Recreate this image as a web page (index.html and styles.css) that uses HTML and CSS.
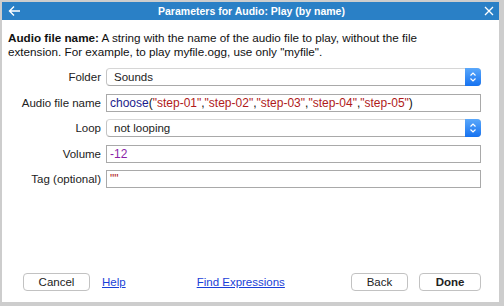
FILE: index.html
```html
<!DOCTYPE html>
<html lang="en">

<head>
  <meta charset="UTF-8" />
  <title>Parameters for Audio: Play (by name)</title>
  <link rel="stylesheet" href="styles.css">
</head>

<body>
  <div class="window">
    <header class="titlebar">
      <span class="back-icon">
        <svg width="13" height="12" viewBox="0 0 13 12">
          <path d="M12 6H1.5M6 1.5L1.5 6 6 10.5" fill="none" stroke="#fff" stroke-width="1.4" />
        </svg>
      </span>
      <span class="title">Parameters for Audio: Play (by name)</span>
      <span class="close-icon">
        <svg width="10" height="10" viewBox="0 0 10 10">
          <path d="M1 1l8 8M9 1L1 9" fill="none" stroke="#fff" stroke-width="1.3" />
        </svg>
      </span>
    </header>

    <main class="content">
      <p class="help-text"><b>Audio file name:</b> A string with the name of the audio file to play, without the file extension. For example, to play myfile.ogg, use only "myfile".</p>

      <div class="param-form">
        <label>Folder</label>
        <div class="select-box">
          <span>Sounds</span>
          <span class="stepper">
            <svg width="8" height="12" viewBox="0 0 8 12">
              <path d="M1.5 4.5L4 2l2.5 2.5M1.5 7.5L4 10l2.5-2.5" fill="none" stroke="#fff" stroke-width="1.2" />
            </svg>
          </span>
        </div>

        <label>Audio file name</label>
        <div class="text-box"><span class="fn">choose</span>(<span class="str">"step-01"</span>,<span class="str">"step-02"</span>,<span class="str">"step-03"</span>,<span class="str">"step-04"</span>,<span class="str">"step-05"</span>)</div>

        <label>Loop</label>
        <div class="select-box">
          <span>not looping</span>
          <span class="stepper">
            <svg width="8" height="12" viewBox="0 0 8 12">
              <path d="M1.5 4.5L4 2l2.5 2.5M1.5 7.5L4 10l2.5-2.5" fill="none" stroke="#fff" stroke-width="1.2" />
            </svg>
          </span>
        </div>

        <label>Volume</label>
        <div class="text-box"><span class="num">-12</span></div>

        <label>Tag (optional)</label>
        <div class="text-box"><span class="str">""</span></div>
      </div>
    </main>

    <footer class="button-bar">
      <button class="btn">Cancel</button>
      <a href="#" class="link">Help</a>
      <a href="#" class="link find-link">Find Expressions</a>
      <button class="btn back-btn">Back</button>
      <button class="btn done-btn">Done</button>
    </footer>
  </div>
</body>

</html>
```

FILE: styles.css
```css
body {
  margin: 0;
  background-color: #cdcdcd;
  font-family: 'Liberation Sans', Arial, sans-serif;
  font-size: 11.5px;
  color: #222;
}

.window {
  margin: 2px 0 0 2px;
  width: 497px;
  height: 300px;
  background-color: #fff;
  display: flex;
  flex-direction: column;
}

.titlebar {
  height: 18px;
  background-color: #2a80c6;
  display: flex;
  align-items: center;
  padding: 0 4px 0 6px;
  color: #fff;
}

.back-icon,
.close-icon {
  display: flex;
  width: 13px;
  justify-content: center;
}

.title {
  flex: 1;
  text-align: center;
  font-weight: bold;
  font-size: 10.5px;
}

.content {
  flex: 1;
  padding: 0 6px;
}

.help-text {
  margin: 11px 0 9px;
  max-width: 440px;
  line-height: 14px;
  font-size: 11.7px;
  color: #111;
}

.param-form {
  display: grid;
  grid-template-columns: 93px 1fr;
  grid-auto-rows: 18px;
  column-gap: 5px;
  row-gap: 7.5px;
  padding-right: 12px;
  align-items: center;
}

.param-form label {
  text-align: right;
}

.select-box {
  height: 18px;
  display: flex;
  align-items: center;
  border: 1px solid #c4c4c4;
  border-top-color: #d6d6d6;
  border-bottom-color: #a9a9a9;
  border-radius: 4px;
  box-sizing: border-box;
  padding-left: 7px;
}

.select-box span:first-child {
  flex: 1;
}

.stepper {
  width: 16px;
  height: 18px;
  margin: -1px -1px -1px 0;
  background: linear-gradient(#5aa8fb, #1672f0);
  border-radius: 0 4px 4px 0;
  display: flex;
  align-items: center;
  justify-content: center;
}

.text-box {
  height: 18px;
  box-sizing: border-box;
  border: 1px solid #a9a9a9;
  padding: 0 3px;
  display: flex;
  align-items: center;
  font-size: 12px;
  color: #111;
}

.fn {
  color: #1c1c8c;
}

.str {
  color: #b01a1a;
}

.num {
  color: #8b1fa8;
}

.button-bar {
  display: flex;
  align-items: center;
  padding: 0 18px 11px 21px;
}

.btn {
  height: 18px;
  width: 67px;
  background-color: #fff;
  border: 1px solid #c2c2c2;
  border-radius: 4px;
  font-family: inherit;
  font-size: 11.5px;
  color: #222;
  padding: 0;
}

.link {
  color: #1a3fd8;
  margin-left: 12px;
}

.find-link {
  margin-left: 71px;
}

.back-btn {
  margin-left: auto;
  width: 57px;
}

.done-btn {
  margin-left: 11px;
  width: 62px;
  font-weight: bold;
}
```
